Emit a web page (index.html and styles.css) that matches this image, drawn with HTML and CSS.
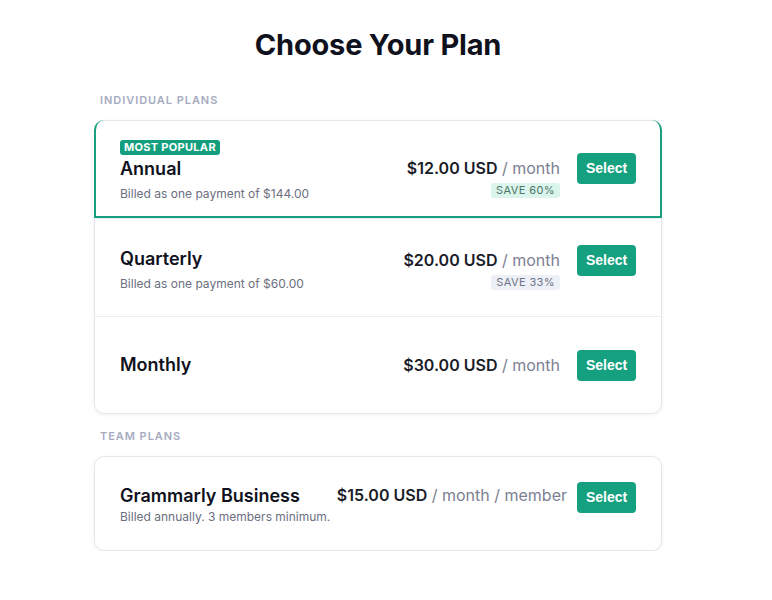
FILE: index.html
```html
<!DOCTYPE html>
<html>
<head>
<meta charset="utf-8">
<link rel="stylesheet" href="styles.css">
</head>
<body>
<main class="page">
  <h1 class="title">Choose Your Plan</h1>

  <div class="section-label">INDIVIDUAL PLANS</div>
  <div class="card">
    <div class="row row-selected">
      <div class="info">
        <span class="popular">MOST POPULAR</span>
        <div class="name">Annual</div>
        <div class="billed">Billed as one payment of $144.00</div>
      </div>
      <div class="price-col">
        <div class="price"><b>$12.00 USD</b> <span class="per">/ month</span></div>
        <span class="save save-green">SAVE 60%</span>
      </div>
      <button class="select">Select</button>
    </div>
    <div class="row row-q">
      <div class="info">
        <div class="name">Quarterly</div>
        <div class="billed">Billed as one payment of $60.00</div>
      </div>
      <div class="price-col">
        <div class="price"><b>$20.00 USD</b> <span class="per">/ month</span></div>
        <span class="save save-gray">SAVE 33%</span>
      </div>
      <button class="select">Select</button>
    </div>
    <div class="row row-m">
      <div class="info">
        <div class="name">Monthly</div>
      </div>
      <div class="price-col">
        <div class="price"><b>$30.00 USD</b> <span class="per">/ month</span></div>
      </div>
      <button class="select">Select</button>
    </div>
  </div>

  <div class="section-label team-label">TEAM PLANS</div>
  <div class="card">
    <div class="row row-team">
      <div class="info">
        <div class="name">Grammarly Business</div>
        <div class="billed">Billed annually. 3 members minimum.</div>
      </div>
      <div class="price-col">
        <div class="price"><b>$15.00 USD</b> <span class="per">/ month / member</span></div>
      </div>
      <button class="select">Select</button>
    </div>
  </div>
</main>
</body>
</html>
```
FILE: styles.css
```css
* { box-sizing: border-box; }
html, body { margin: 0; padding: 0; background: #ffffff; }
body {
  font-family: Inter, "Noto Sans", sans-serif;
  color: #111322;
}
.page {
  width: 568px;
  margin-left: 94px;
  padding-top: 27px;
}
.title {
  margin: 0;
  text-align: center;
  font-family: Inter, sans-serif;
  font-size: 29px;
  font-weight: 700;
  line-height: 36px;
  color: #0f111c;
  letter-spacing: -0.2px;
}
.section-label {
  margin-top: 30px;
  padding-left: 6px;
  font-size: 11px;
  font-weight: 600;
  letter-spacing: 0.95px;
  color: #a6abbf;
  line-height: 14px;
}
.team-label { margin-top: 15px; }
.card {
  margin-top: 13px;
  border: 1px solid #e6e7ed;
  border-radius: 10px;
  box-shadow: 0 1px 4px rgba(20, 25, 60, 0.06);
  background: #fff;
}
.row {
  display: flex;
  align-items: center;
  padding: 0 25px 0 25px;
  height: 97px;
  border-top: 1px solid #ececf1;
}
.row:first-child { border-top: none; }
.row-selected {
  margin: -1px -1px 0 -1px;
  height: 98px;
  border: 2px solid #179f7f;
  border-radius: 10px 10px 0 0;
  padding: 0 24px 0 24px;
}
.row-q { height: 98px; padding-top: 4px; }
.row-team { height: 93px; }
.info { flex: 1; min-width: 0; }
.popular {
  display: inline-block;
  background: #139f7d;
  color: #fff;
  font-size: 11px;
  font-weight: 700;
  letter-spacing: 0.3px;
  line-height: 15px;
  padding: 0 4px;
  border-radius: 3px;
  margin-bottom: 2px;
}
.name {
  font-size: 18px;
  font-weight: 600;
  line-height: 24px;
  color: #0f111c;
}
.billed {
  font-size: 12px;
  color: #6b6f80;
  line-height: 16px;
  margin-top: 5px;
}
.row-team .info { padding-top: 2px; }
.row-team .billed { margin-top: 1px; }
.price-col {
  display: flex;
  flex-direction: column;
  align-items: flex-end;
  margin-right: 17px;
}
.price {
  font-size: 16px;
  line-height: 22px;
  color: #1a1c28;
  white-space: nowrap;
}
.price b { font-weight: 600; }
.per { color: #7c8093; }
.save {
  margin-top: 4px;
  font-size: 11px;
  letter-spacing: 0.4px;
  line-height: 15px;
  padding: 0 5px;
  border-radius: 3px;
}
.save-green { background: #dbf4ec; color: #4b7567; }
.save-gray { background: #eef0f7; color: #6f7386; }
.select {
  width: 59px;
  height: 31px;
  border: none;
  border-radius: 4px;
  background: #15a17f;
  color: #fff;
  font-family: "Liberation Sans", Arial, sans-serif;
  font-size: 14px;
  font-weight: 700;
  padding: 0;
}
.row-selected .price-col { padding-top: 19px; }
.row-q .select { margin-top: -19px; }
.row-team .price-col { margin-right: 10px; margin-bottom: 17px; }
.row-team .select { margin-bottom: 13px; }
```
